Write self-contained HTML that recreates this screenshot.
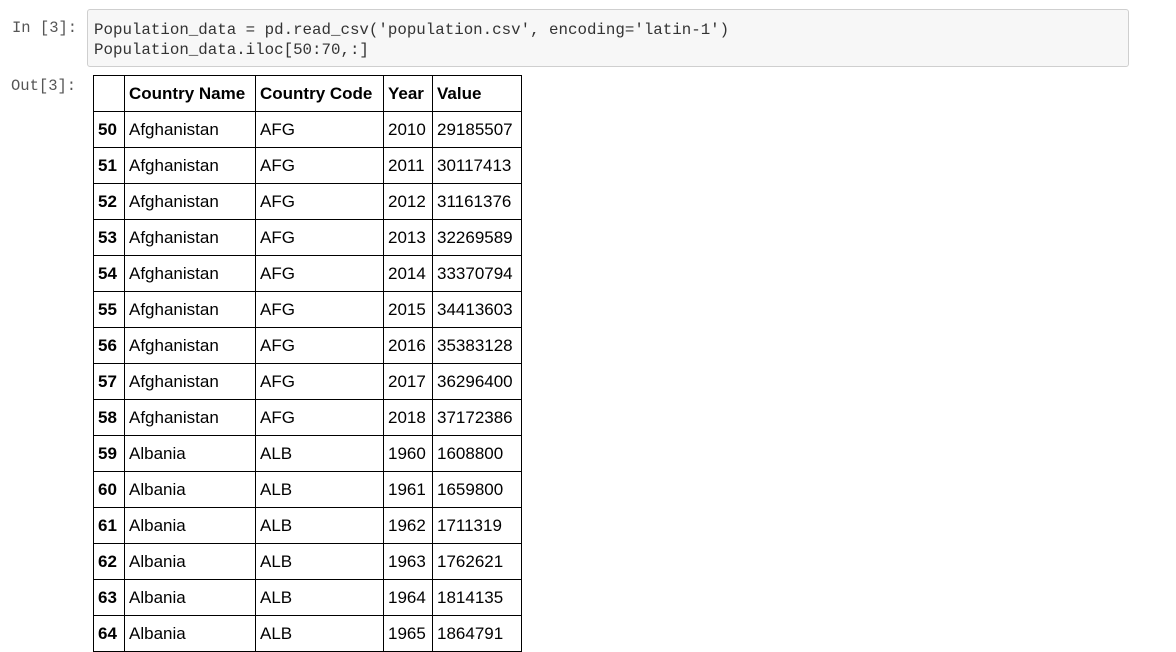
<!DOCTYPE html>
<html><head><style>
body{margin:0;width:1176px;height:651px;overflow:hidden;background:#fff;position:relative;font-family:"Liberation Sans",Arial,sans-serif}
.p{position:absolute;font-family:"Liberation Mono",monospace;font-size:15.5px;color:#555}
.code{position:absolute;left:87px;top:9px;width:1042px;height:58px;border:1px solid #cfcfcf;border-radius:3px;background:#f7f7f7;box-sizing:border-box;font-family:"Liberation Mono",monospace;font-size:15.8px;line-height:20px;padding:10px 0 0 6px;color:#333;white-space:pre}
table{position:absolute;left:93px;top:75px;border-collapse:collapse;font-size:17px;color:#000}
tr{height:36px}
td,th{border:1px solid #000;padding:0 4px;text-align:left;white-space:nowrap}
th{font-weight:bold}
td.i{font-weight:bold}
</style></head><body>
<div class="p" style="left:12px;top:19px">In [3]:</div>
<div class="p" style="left:11px;top:77px">Out[3]:</div>
<div class="code">Population_data = pd.read_csv('population.csv', encoding='latin-1')
Population_data.iloc[50:70,:]</div>
<table>
<colgroup><col style="width:31px"><col style="width:131px"><col style="width:128px"><col style="width:49px"><col style="width:89px"></colgroup>
<tr><th></th><th>Country Name</th><th>Country Code</th><th>Year</th><th>Value</th></tr>
<tr><td class="i">50</td><td>Afghanistan</td><td>AFG</td><td>2010</td><td>29185507</td></tr>
<tr><td class="i">51</td><td>Afghanistan</td><td>AFG</td><td>2011</td><td>30117413</td></tr>
<tr><td class="i">52</td><td>Afghanistan</td><td>AFG</td><td>2012</td><td>31161376</td></tr>
<tr><td class="i">53</td><td>Afghanistan</td><td>AFG</td><td>2013</td><td>32269589</td></tr>
<tr><td class="i">54</td><td>Afghanistan</td><td>AFG</td><td>2014</td><td>33370794</td></tr>
<tr><td class="i">55</td><td>Afghanistan</td><td>AFG</td><td>2015</td><td>34413603</td></tr>
<tr><td class="i">56</td><td>Afghanistan</td><td>AFG</td><td>2016</td><td>35383128</td></tr>
<tr><td class="i">57</td><td>Afghanistan</td><td>AFG</td><td>2017</td><td>36296400</td></tr>
<tr><td class="i">58</td><td>Afghanistan</td><td>AFG</td><td>2018</td><td>37172386</td></tr>
<tr><td class="i">59</td><td>Albania</td><td>ALB</td><td>1960</td><td>1608800</td></tr>
<tr><td class="i">60</td><td>Albania</td><td>ALB</td><td>1961</td><td>1659800</td></tr>
<tr><td class="i">61</td><td>Albania</td><td>ALB</td><td>1962</td><td>1711319</td></tr>
<tr><td class="i">62</td><td>Albania</td><td>ALB</td><td>1963</td><td>1762621</td></tr>
<tr><td class="i">63</td><td>Albania</td><td>ALB</td><td>1964</td><td>1814135</td></tr>
<tr><td class="i">64</td><td>Albania</td><td>ALB</td><td>1965</td><td>1864791</td></tr>
</table>
</body></html>
